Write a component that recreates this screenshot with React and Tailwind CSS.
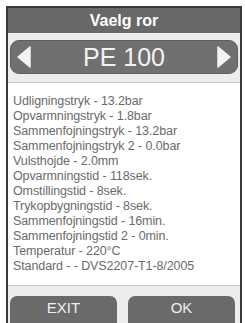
const lines = [
  'Udligningstryk - 13.2bar',
  'Opvarmningstryk - 1.8bar',
  'Sammenfojningstryk - 13.2bar',
  'Sammenfojningstryk 2 - 0.0bar',
  'Vulsthojde - 2.0mm',
  'Opvarmningstid - 118sek.',
  'Omstillingstid - 8sek.',
  'Trykopbygningstid - 8sek.',
  'Sammenfojningstid - 16min.',
  'Sammenfojningstid 2 - 0min.',
  'Temperatur - 220°C',
  'Standard - - DVS2207-T1-8/2005',
];

function Arrow({ dir }) {
  const d = dir === 'left' ? 'M13 1 L1 11 L13 21 Z' : 'M1 1 L13 11 L1 21 Z';
  return (
    <svg width="14" height="22" viewBox="0 0 14 22">
      <path d={d} fill="#f4f4f4" stroke="#f4f4f4" strokeWidth="1.5" strokeLinejoin="round" />
    </svg>
  );
}

export default function App() {
  return (
    <div className="w-[245px] h-[323px] bg-white overflow-hidden pt-[6px] pl-[6px] font-['Liberation_Sans',Arial,sans-serif]">
      <div className="w-[236px] h-[330px] border-2 border-b-0 border-[#3a3a3a] bg-[#ececec] flex flex-col">
        {/* Title */}
        <div className="h-[25px] bg-[#686868] flex items-center justify-center">
          <span className="text-[16px] font-bold text-white leading-none">Vaelg ror</span>
        </div>

        {/* Selector */}
        <div className="mt-[7px] mx-[2px] h-[34px] rounded-[9px] bg-[#707070] border border-[#5c5c5c] flex items-center justify-between px-[6px]">
          <Arrow dir="left" />
          <span className="text-[25px] text-[#f2f2f2] leading-none">PE 100</span>
          <Arrow dir="right" />
        </div>

        {/* Parameters */}
        <div className="mt-[8px] h-[204px] bg-white border-t border-b border-[#c8c8c8] pt-[11px] pl-[5px]">
          {lines.map((l) => (
            <div key={l} className="text-[12.5px] leading-[15px] text-[#6a6a6a] whitespace-nowrap tracking-[-0.1px]">
              {l}
            </div>
          ))}
        </div>

        {/* Buttons */}
        <div className="mt-[10px] flex gap-[11px] px-[2px]">
          <button className="w-[107px] h-[30px] rounded-t-[7px] bg-[#6a6a6a] text-[15px] text-[#eeeeee] leading-[18px] pt-[3px] flex justify-center items-start">
            EXIT
          </button>
          <button className="w-[107px] h-[30px] rounded-t-[7px] bg-[#6a6a6a] text-[15px] text-[#eeeeee] leading-[18px] pt-[3px] flex justify-center items-start">
            OK
          </button>
        </div>
      </div>
    </div>
  );
}
